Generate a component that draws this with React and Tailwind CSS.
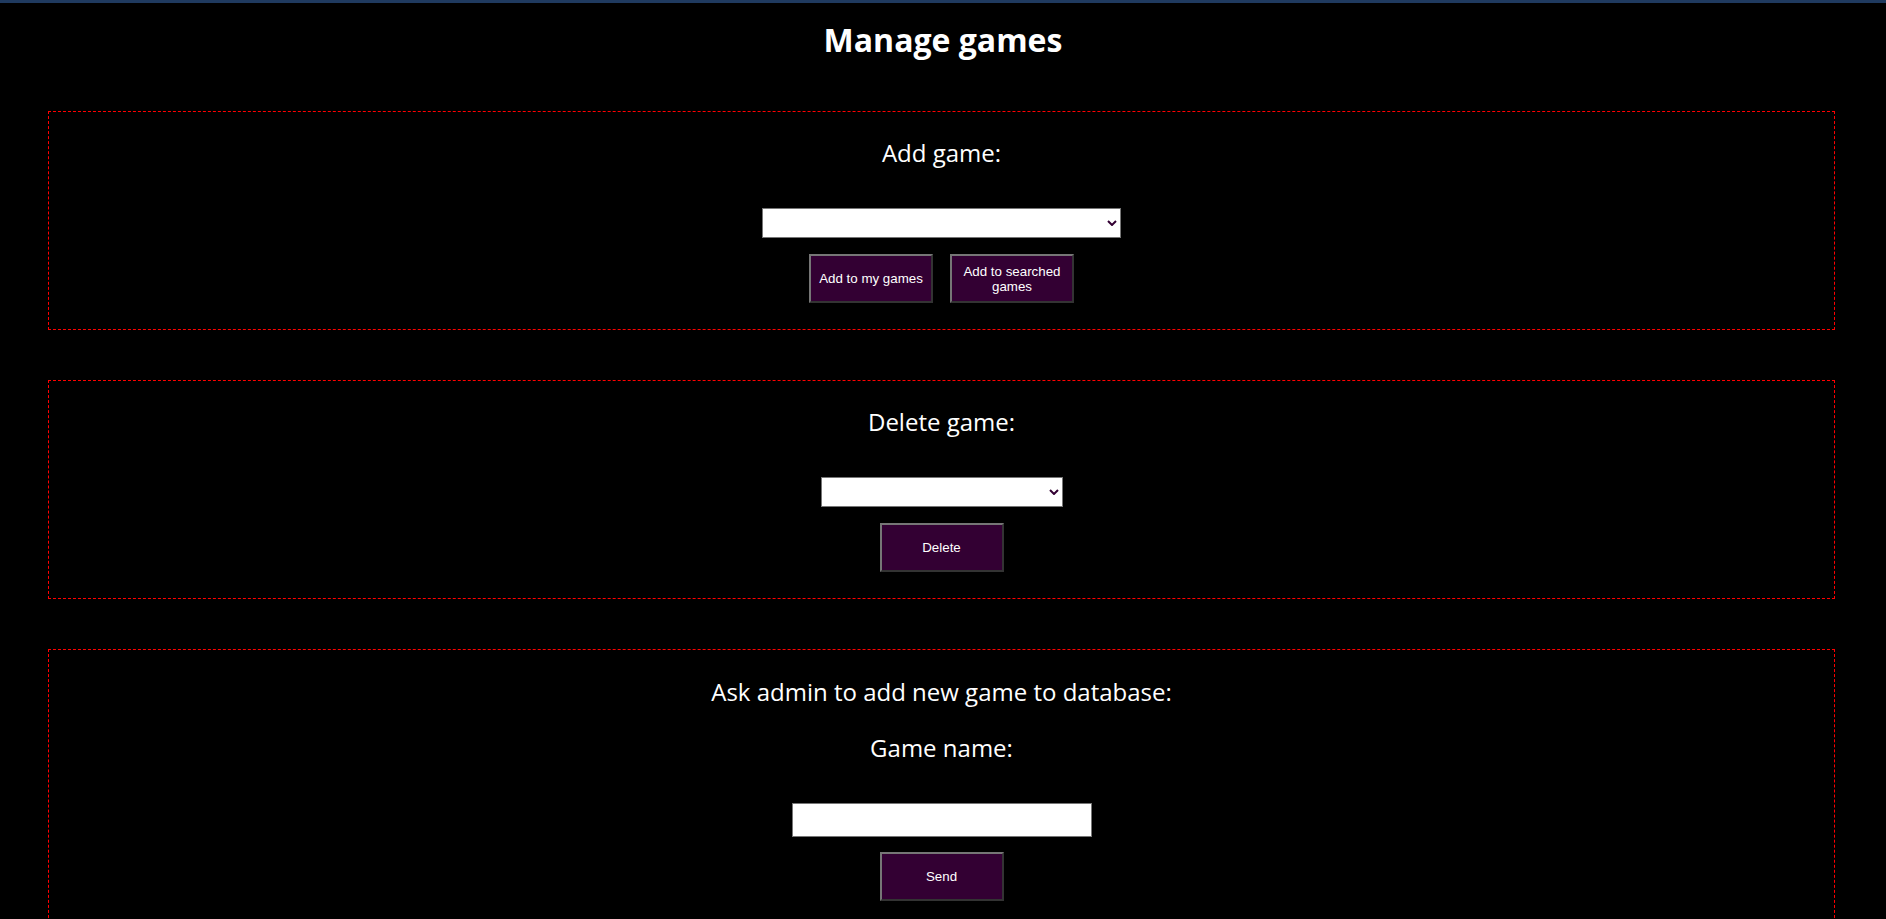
import { useState } from "react";

const Chevron = () => (
  <svg
    width="10"
    height="6"
    viewBox="0 0 10 6"
    className="pointer-events-none absolute right-[4px] top-[12px]"
  >
    <polyline
      points="1,1 5,5 9,1"
      fill="none"
      stroke="#330033"
      strokeWidth="2"
    />
  </svg>
);

const GameSelect = ({ width, value, onChange }) => (
  <div className={`relative ${width}`}>
    <select
      value={value}
      onChange={(e) => onChange(e.target.value)}
      className="appearance-none w-full h-[30px] bg-white border border-[#767676] text-black text-[13px] px-1 outline-none"
    >
      <option value=""></option>
    </select>
    <Chevron />
  </div>
);

const PurpleButton = ({ children, onClick }) => (
  <button
    onClick={onClick}
    className="w-[124px] h-[49px] px-[6px] bg-[#330033] text-white text-[13.33px] leading-[15px] border-2 border-t-[#767676] border-l-[#767676] border-r-[#333333] border-b-[#333333] font-['Liberation_Sans',Arial,sans-serif]"
  >
    {children}
  </button>
);

const App = () => {
  const [addGame, setAddGame] = useState("");
  const [deleteGame, setDeleteGame] = useState("");
  const [gameName, setGameName] = useState("");

  return (
    <div className="min-h-screen bg-black text-white font-['Open_Sans',sans-serif]">
      <div className="h-[3px] bg-[#1f3a5f]" />
      <h1 className="mt-[15px] text-[32px] leading-[44px] font-bold text-center">
        Manage games
      </h1>

      {/* add game */}
      <section className="mt-[49px] ml-[48px] mr-[51px] border border-dashed border-[#ff0000] pt-[25px] pb-[26px] flex flex-col items-center">
        <h2 className="text-[24px] leading-[32px]">Add game:</h2>
        <div className="mt-[39px]">
          <GameSelect width="w-[359px]" value={addGame} onChange={setAddGame} />
        </div>
        <div className="mt-[16px] flex gap-[17px]">
          <PurpleButton>Add to my games</PurpleButton>
          <PurpleButton>Add to searched games</PurpleButton>
        </div>
      </section>

      {/* delete game */}
      <section className="mt-[50px] ml-[48px] mr-[51px] border border-dashed border-[#ff0000] pt-[25px] pb-[26px] flex flex-col items-center">
        <h2 className="text-[24px] leading-[32px]">Delete game:</h2>
        <div className="mt-[39px]">
          <GameSelect
            width="w-[242px]"
            value={deleteGame}
            onChange={setDeleteGame}
          />
        </div>
        <div className="mt-[16px]">
          <PurpleButton>Delete</PurpleButton>
        </div>
      </section>

      {/* request new game */}
      <section className="mt-[50px] ml-[48px] mr-[51px] border border-dashed border-[#ff0000] pt-[26px] pb-[26px] flex flex-col items-center">
        <h2 className="text-[24px] leading-[32px]">
          Ask admin to add new game to database:
        </h2>
        <h3 className="mt-[24px] text-[24px] leading-[32px]">Game name:</h3>
        <input
          type="text"
          value={gameName}
          onChange={(e) => setGameName(e.target.value)}
          className="mt-[39px] w-[300px] h-[34px] bg-white border border-[#767676] text-black px-1 outline-none"
        />
        <div className="mt-[15px]">
          <PurpleButton>Send</PurpleButton>
        </div>
      </section>
    </div>
  );
};

export default App;
